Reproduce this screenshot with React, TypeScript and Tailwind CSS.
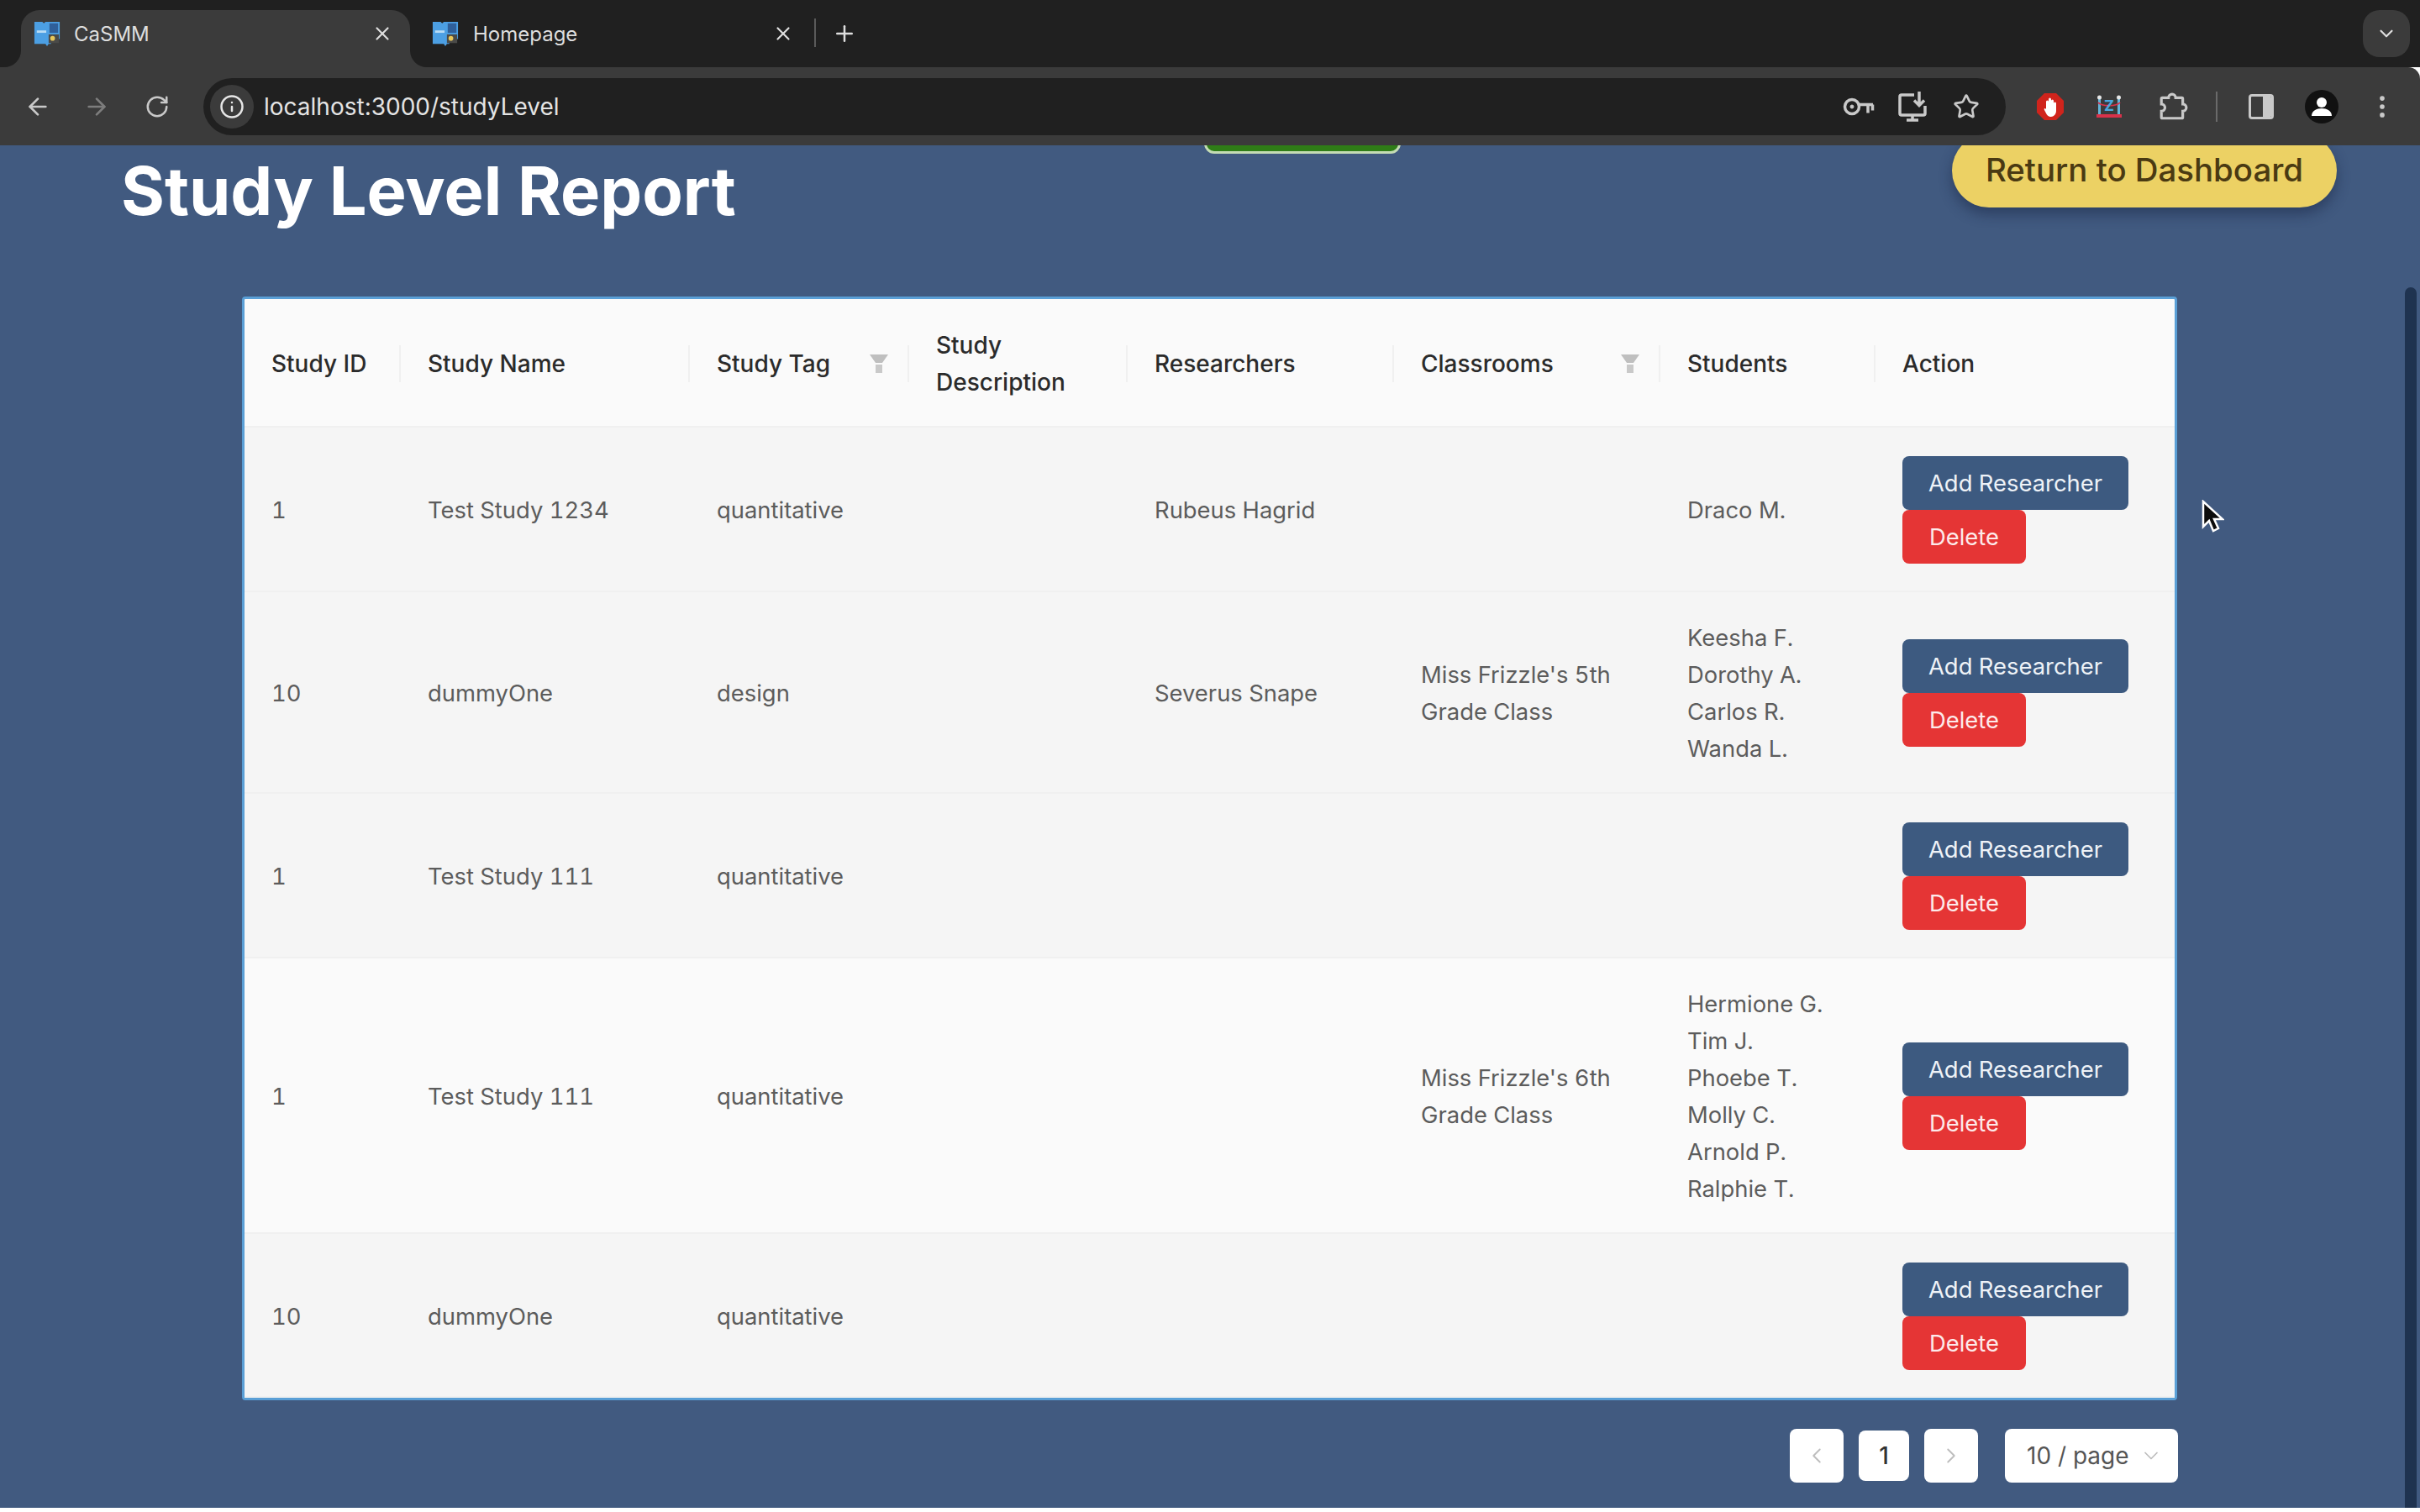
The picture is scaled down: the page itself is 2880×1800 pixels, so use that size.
import { ReactElement } from "react";
import { ArrowLeft, ArrowRight, ChevronDown, ChevronLeft, ChevronRight, EllipsisVertical, Info, Plus, RotateCw, Star, X } from "lucide-react";

interface Study {
  id: string;
  name: string;
  tag: string;
  researcher: string;
  classroom: string[];
  students: string[];
  light?: boolean;
}

const studies: Study[] = [
  { id: "1", name: "Test Study 1234", tag: "quantitative", researcher: "Rubeus Hagrid", classroom: [], students: ["Draco M."] },
  { id: "10", name: "dummyOne", tag: "design", researcher: "Severus Snape", classroom: ["Miss Frizzle's 5th", "Grade Class"], students: ["Keesha F.", "Dorothy A.", "Carlos R.", "Wanda L."] },
  { id: "1", name: "Test Study 111", tag: "quantitative", researcher: "", classroom: [], students: [] },
  { id: "1", name: "Test Study 111", tag: "quantitative", researcher: "", classroom: ["Miss Frizzle's 6th", "Grade Class"], students: ["Hermione G.", "Tim J.", "Phoebe T.", "Molly C.", "Arnold P.", "Ralphie T."], light: true },
  { id: "10", name: "dummyOne", tag: "quantitative", researcher: "", classroom: [], students: [] },
];

function Favicon(): ReactElement {
  return (
    <svg width="32" height="32" viewBox="0 0 34 34" className="shrink-0">
      <path d="M1 2h10l2 2 2-2h18v22H22v6H19l-2 3-2-3H1z" fill="#4c9fe3" />
      <rect x="20" y="4" width="11" height="12" fill="#2f5f9a" />
      <rect x="19" y="18" width="13" height="11" fill="#4a4a48" />
      <circle cx="24" cy="23" r="3" fill="#e8c75a" />
      <rect x="4" y="13" width="12" height="3" fill="#b9dcf5" />
    </svg>
  );
}

function FilterIcon(): ReactElement {
  return (
    <svg width="22" height="24" viewBox="0 0 22 24" className="shrink-0">
      <path d="M0 1h22l-7 10H7z" fill="#bfbfbf" />
      <rect x="7" y="13" width="8" height="10" fill="#c9c9c9" />
    </svg>
  );
}

function KeyIcon(): ReactElement {
  return (
    <svg width="38" height="26" viewBox="0 0 38 26" fill="none" stroke="#c9c9c9" strokeWidth="3.5">
      <circle cx="11" cy="13" r="8.500" />
      <circle cx="11" cy="13" r="2" fill="#c9c9c9" strokeWidth="1" />
      <path d="M19 10.500h17M30 10.500v10M35.500 10.500v7" />
    </svg>
  );
}

function InstallIcon(): ReactElement {
  return (
    <svg width="36" height="38" viewBox="0 0 36 38" fill="none" stroke="#c9c9c9" strokeWidth="3.5">
      <path d="M20 5H5a2 2 0 0 0-2 2v20a2 2 0 0 0 2 2h26a2 2 0 0 0 2-2V18" />
      <path d="M11 35h14M18 29v6" />
      <path d="M26 1v16M20 11.500l6 6 6-6" />
    </svg>
  );
}

function PuzzleIcon(): ReactElement {
  return (
    <svg width="36" height="36" viewBox="0 0 34 34" fill="none" stroke="#c9c9c9" strokeWidth="3">
      <path d="M5 7h7a4 4 0 0 1 8 0h7a1 1 0 0 1 1 1v6a4 4 0 0 1 0 8v7a1 1 0 0 1-1 1H5a1 1 0 0 1-1-1v-7a4 4 0 0 0 0-8V8a1 1 0 0 1 1-1z" />
    </svg>
  );
}

function RopeIcon(): ReactElement {
  return (
    <svg width="32" height="28" viewBox="0 0 32 28">
      <rect x="3" y="4" width="3" height="20" fill="#63b4d8" />
      <rect x="26" y="4" width="3" height="20" fill="#63b4d8" />
      <circle cx="4.500" cy="3" r="2.500" fill="#e6e6e6" />
      <circle cx="27.500" cy="3" r="2.500" fill="#e6e6e6" />
      <path d="M3 9c4 5 22 5 26 0" fill="none" stroke="#d8324a" strokeWidth="2" />
      <text x="16" y="19" textAnchor="middle" fontSize="18" fontWeight="700" fill="#4aa8e0">Z</text>
      <rect x="1" y="23" width="30" height="4" fill="#d8324a" />
    </svg>
  );
}

function Cursor(): ReactElement {
  return (
    <svg width="28" height="40" viewBox="0 0 28 40" className="absolute left-[2619px] top-[422px]">
      <path d="M3 2v30l7-7 5 12 6-3-5-11h10z" fill="#0c0c0c" stroke="#ffffff" strokeWidth="2.5" />
    </svg>
  );
}

function Cell({ lines }: { lines: string[] }): ReactElement {
  return (
    <td className="px-8 py-8 align-middle shadow-[inset_0_-2px_0_#f0f0f0]">
      {lines.map((line, i) => (
        <div key={i}>{line}</div>
      ))}
    </td>
  );
}

function HeaderCell({ label, filter, last }: { label: string[]; filter?: boolean; last?: boolean }): ReactElement {
  return (
    <th
      className={`relative h-[153px] px-8 text-left align-middle text-[28px] font-medium text-[#2b2b2b] shadow-[inset_0_-2px_0_#f0f0f0] ${
        last ? "" : "before:absolute before:right-0 before:top-[55px] before:h-[44px] before:w-[2px] before:bg-[#f0f0f0]"
      }`}
    >
      <div className="flex items-center justify-between">
        <div>
          {label.map((line) => (
            <div key={line}>{line}</div>
          ))}
        </div>
        {filter && <div className="-mr-[7px]"><FilterIcon /></div>}
      </div>
    </th>
  );
}

export default function App(): ReactElement {
  return (
    <div className="relative flex h-[1800px] w-[2880px] flex-col overflow-hidden bg-white font-['Inter','Liberation_Sans',sans-serif]">
      {/* tab strip */}
      <div className="flex h-[80px] shrink-0 items-end bg-[#202020] pl-[25px] pr-[12px] text-[24px] text-[#dedede]">
        <div className="relative flex h-[68px] w-[463px] items-start rounded-t-[22px] bg-[#3b3b3b] pl-[15px] pr-[20px] pt-[12px]">
          <svg width="20" height="20" viewBox="0 0 20 20" className="absolute -left-[20px] bottom-0">
            <path d="M20 0A20 20 0 0 1 0 20H20z" fill="#3b3b3b" />
          </svg>
          <Favicon />
          <span className="-mt-[1px] ml-[16px]">CaSMM</span>
          <X size={26} className="ml-auto mt-[3px]" />
          <svg width="20" height="20" viewBox="0 0 20 20" className="absolute -right-[20px] bottom-0">
            <path d="M0 0A20 20 0 0 0 20 20H0z" fill="#3b3b3b" />
          </svg>
        </div>
        <div className="flex h-[68px] w-[481px] items-start pl-[26px] pr-[24px] pt-[12px]">
          <Favicon />
          <span className="-mt-[1px] ml-[17px]">Homepage</span>
          <X size={26} className="ml-auto mt-[3px]" />
        </div>
        <div className="mb-[24px] h-[34px] w-[2px] bg-[#5a5a5a]" />
        <Plus size={30} className="mb-[25px] ml-[19px]" />
        <div className="mb-[12px] ml-auto flex h-[56px] w-[56px] items-center justify-center rounded-[20px] bg-[#3b3b3b]">
          <ChevronDown size={26} />
        </div>
      </div>

      {/* toolbar */}
      <div className="flex h-[93px] shrink-0 items-center rounded-tr-[14px] bg-[#3b3b3b] pl-[10px] pr-[3px] text-[#c9c9c9]">
        <div className="flex w-[70px] justify-center"><ArrowLeft size={32} /></div>
        <div className="flex w-[70px] justify-center text-[#7d7d7d]"><ArrowRight size={32} /></div>
        <div className="flex w-[74px] justify-center"><RotateCw size={30} /></div>
        <div className="ml-[18px] flex h-[68px] flex-1 items-center rounded-full bg-[#202020] pl-[8px] pr-[15px]">
          <div className="flex h-[52px] w-[52px] items-center justify-center rounded-full bg-[#3b3b3b]">
            <Info size={30} className="text-[#e6e6e6]" />
          </div>
          <span className="ml-[12px] text-[28px] text-[#e4e4e4]">localhost:3000/studyLevel</span>
          <div className="ml-auto flex w-[64px] justify-center"><KeyIcon /></div>
          <div className="flex w-[64px] justify-center"><InstallIcon /></div>
          <div className="flex w-[64px] justify-center"><Star size={32} /></div>
        </div>
        <div className="ml-[18px] flex w-[70px] justify-center">
          <svg width="34" height="34" viewBox="0 0 34 34">
            <path d="M10 1h14l9 9v14l-9 9H10l-9-9V10z" fill="#d0241c" />
            <path d="M12 21V11a1.500 1.500 0 0 1 3 0V8a1.500 1.500 0 0 1 3 0v2a1.500 1.500 0 0 1 3 0v3a1.500 1.500 0 0 1 3 0v9c0 4-3 7-6 7-4 0-5-2-8-8-1-2 1-3 2-1z" fill="#ffffff" />
          </svg>
        </div>
        <div className="flex w-[70px] justify-center"><RopeIcon /></div>
        <div className="flex w-[82px] justify-center"><PuzzleIcon /></div>
        <div className="flex w-[22px] justify-center"><div className="h-[36px] w-[2px] bg-[#6a6a6a]" /></div>
        <div className="flex w-[84px] justify-center">
          <div className="flex h-[30px] w-[30px] overflow-hidden rounded-[4px] border-[3px] border-[#c9c9c9]">
            <div className="flex-1" />
            <div className="w-[10px] bg-[#c9c9c9]" />
          </div>
        </div>
        <div className="flex w-[60px] justify-center">
          <svg width="40" height="40" viewBox="0 0 40 40">
            <circle cx="20" cy="20" r="20" fill="#111111" />
            <circle cx="20" cy="15" r="6" fill="#ffffff" />
            <path d="M8 31c0-6 6-9 12-9s12 3 12 9z" fill="#ffffff" />
          </svg>
        </div>
        <div className="flex w-[84px] justify-center"><EllipsisVertical size={34} /></div>
      </div>

      {/* page */}
      <div className="relative h-[1622px] shrink-0 overflow-hidden bg-[#415a80]">
        <div className="flex h-[180px] items-start pl-[144px]">
          <h1 className="mt-[4px] w-[731px] whitespace-nowrap text-[79.3px] font-bold leading-[100px] text-white">Study Level Report</h1>
          <div className="-mt-[54px] ml-[558px] h-[64px] w-[234px] rounded-[12px] border-[3px] border-[#c4dcb4] bg-[#2f7d17]" />
          <button className="-mt-[14px] ml-[656px] h-[88px] w-[458px] rounded-full bg-[#ecd164] text-[38.4px] font-medium text-[#4a3a12] shadow-[0_8px_16px_rgba(20,30,60,0.45)]">
            Return to Dashboard
          </button>
        </div>

        <div className="ml-[288px] w-[2303px] rounded-[4px] border-[3px] border-[#5a9fd6] bg-[#fafafa]">
          <table className="w-full table-fixed border-collapse text-[27.4px] leading-[44px] tabular-nums text-[#5c5c5c]">
            <colgroup>
              <col className="w-[186px]" />
              <col className="w-[344px]" />
              <col className="w-[261px]" />
              <col className="w-[260px]" />
              <col className="w-[317px]" />
              <col className="w-[317px]" />
              <col className="w-[256px]" />
              <col />
            </colgroup>
            <thead>
              <tr>
                <HeaderCell label={["Study ID"]} />
                <HeaderCell label={["Study Name"]} />
                <HeaderCell label={["Study Tag"]} filter />
                <HeaderCell label={["Study", "Description"]} />
                <HeaderCell label={["Researchers"]} />
                <HeaderCell label={["Classrooms"]} filter />
                <HeaderCell label={["Students"]} />
                <HeaderCell label={["Action"]} last />
              </tr>
            </thead>
            <tbody>
              {studies.map((study, i) => (
                <tr key={i} className={`h-[196px] last:h-[195px] ${study.light ? "bg-[#fafafa]" : "bg-[#f5f5f5]"}`}>
                  <Cell lines={[study.id]} />
                  <Cell lines={[study.name]} />
                  <Cell lines={[study.tag]} />
                  <Cell lines={[]} />
                  <Cell lines={study.researcher ? [study.researcher] : []} />
                  <Cell lines={study.classroom} />
                  <Cell lines={study.students} />
                  <td className="px-8 align-middle shadow-[inset_0_-2px_0_#f0f0f0]">
                    <div className="flex flex-col items-start">
                      <button className="h-[64px] w-[269px] rounded-[8px] bg-[#3d5a80] text-[#eef2f7]">Add Researcher</button>
                      <button className="h-[64px] w-[147px] rounded-[8px] bg-[#e53535] text-[#fdeaea]">Delete</button>
                    </div>
                  </td>
                </tr>
              ))}
            </tbody>
          </table>
        </div>

        <div className="mt-[34px] flex w-[2592px] items-center justify-end text-[28px] text-[#555555]">
          <div className="flex h-[64px] w-[64px] items-center justify-center rounded-[8px] bg-white text-[#bdbdbd]"><ChevronLeft size={30} strokeWidth={1.5} /></div>
          <div className="ml-[18px] flex h-[60px] w-[60px] items-center justify-center rounded-[8px] bg-white font-medium text-[#333333]">1</div>
          <div className="ml-[18px] flex h-[64px] w-[64px] items-center justify-center rounded-[8px] bg-white text-[#bdbdbd]"><ChevronRight size={30} strokeWidth={1.5} /></div>
          <div className="ml-[32px] flex h-[64px] w-[206px] items-center rounded-[8px] bg-white pl-[26px] pr-[18px]">
            <span>10 / page</span>
            <ChevronDown size={28} strokeWidth={1.5} className="ml-auto text-[#bdbdbd]" />
          </div>
        </div>

        <div className="absolute bottom-0 left-[2862px] top-[169px] w-[14px] rounded-t-full bg-[#1f3350]" />
        <Cursor />
      </div>
    </div>
  );
}
